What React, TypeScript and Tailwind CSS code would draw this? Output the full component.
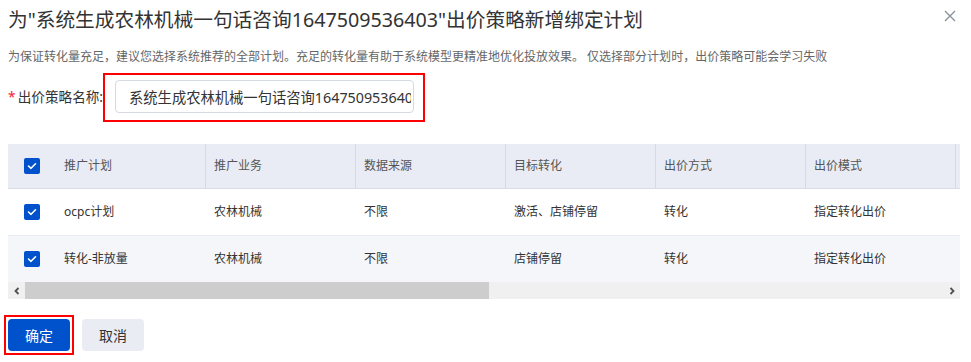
import React from "react";

const font = { fontFamily: '"Noto Sans", "Noto Sans CJK SC", sans-serif' };

function Check() {
  return (
    <div className="w-4 h-4 rounded-[2px] bg-[#0052cc] flex items-center justify-center shrink-0">
      <svg width="10" height="8" viewBox="0 0 10 8">
        <polyline points="1.5,4 4,6.3 8.5,1.8" fill="none" stroke="#fff" strokeWidth="1.6" strokeLinecap="round" strokeLinejoin="round" />
      </svg>
    </div>
  );
}

const cols = ["推广业务", "数据来源", "目标转化", "出价方式", "出价模式"];
const rows = [
  ["ocpc计划", "农林机械", "不限", "激活、店铺停留", "转化", "指定转化出价"],
  ["转化-非放量", "农林机械", "不限", "店铺停留", "转化", "指定转化出价"],
];

export default function App() {
  return (
    <div className="w-[971px] h-[362px] bg-white overflow-hidden" style={font}>
      <div className="flex items-start justify-between pl-2 pr-[15px] pt-[7px]">
        <div className="text-[19.7px] leading-[26px] text-[#333]">为"系统生成农林机械一句话咨询1647509536403"出价策略新增绑定计划</div>
        <svg width="12" height="12" viewBox="0 0 12 12" className="mt-[3px]">
          <path d="M1 1 L11 11 M11 1 L1 11" stroke="#8c929c" strokeWidth="1.4" />
        </svg>
      </div>
      <div className="px-2 mt-[15px] text-[12px] leading-[18px] text-[#666]">
        为保证转化量充足，建议您选择系统推荐的全部计划。充足的转化量有助于系统模型更精准地优化投放效果。 仅选择部分计划时，出价策略可能会学习失败
      </div>
      <div className="flex items-center mt-[7px] pl-2">
        <span className="w-[95px] whitespace-nowrap text-[13.6px] text-[#333] flex items-center">
          <span className="inline-block w-[10px] text-[#f5222d]">*</span>
          <span>出价策略名称:</span>
        </span>
        <div className="border-2 border-[#ff0000] pl-[10px] pr-[9px] pt-[5px] pb-[7px]">
          <div className="w-[299px] h-[33px] border border-[#d4d9e3] rounded-[4px] bg-white flex items-center pl-[13px]">
            <div className="w-[282px] overflow-hidden">
              <span className="text-[14.3px] text-[#333] whitespace-nowrap">系统生成农林机械一句话咨询1647509536403</span>
            </div>
          </div>
        </div>
      </div>

      <div className="mx-2 mt-[22px] w-[952px] overflow-hidden">
        <div className="flex h-[45px] bg-[#e9ecf4] border-b border-[#d8dde8] text-[12px] text-[#555]">
          <div className="w-[198px] shrink-0 flex items-center pl-4 border-r border-[#d5dae4]">
            <Check />
            <span className="ml-6">推广计划</span>
          </div>
          {cols.map((c) => (
            <div key={c} className="w-[150px] shrink-0 flex items-center pl-2 border-r border-[#d5dae4]">
              {c}
            </div>
          ))}
          <div className="flex-1" />
        </div>
        {rows.map((r, i) => (
          <div
            key={i}
            className={
              i === 0
                ? "flex h-[47px] bg-white border-b border-[#e9ecf2] text-[12px] text-[#333]"
                : "flex h-[46px] bg-[#f5f6fa] text-[12px] text-[#333]"
            }
          >
            <div className="w-[198px] shrink-0 flex items-center pl-4">
              <Check />
              <span className="ml-6">{r[0]}</span>
            </div>
            {r.slice(1).map((c, j) => (
              <div key={j} className="w-[150px] shrink-0 flex items-center pl-2">
                {c}
              </div>
            ))}
          </div>
        ))}
        <div className="flex h-[17px] bg-[#f0f0f0]">
          <div className="w-[17px] flex items-center justify-center bg-[#f0f0f0]">
            <svg width="8" height="8" viewBox="0 0 8 8">
              <polyline points="5.5,1 2.5,4 5.5,7" fill="none" stroke="#505050" strokeWidth="1.8" />
            </svg>
          </div>
          <div className="w-[464px] bg-[#cdcdcd]" />
          <div className="flex-1" />
          <div className="w-[17px] flex items-center justify-center">
            <svg width="8" height="8" viewBox="0 0 8 8">
              <polyline points="2.5,1 5.5,4 2.5,7" fill="none" stroke="#505050" strokeWidth="1.8" />
            </svg>
          </div>
        </div>
      </div>

      <div className="flex items-center mt-[16px] pl-1">
        <div className="border-2 border-[#ff0000] p-[2px]">
          <button className="w-[62px] h-[32px] rounded-[4px] bg-[#0052cc] text-white text-[14px]">确定</button>
        </div>
        <button className="ml-2 w-[62px] h-[32px] rounded-[4px] bg-[#e9ecf2] text-[#333] text-[14px]">取消</button>
      </div>
    </div>
  );
}
